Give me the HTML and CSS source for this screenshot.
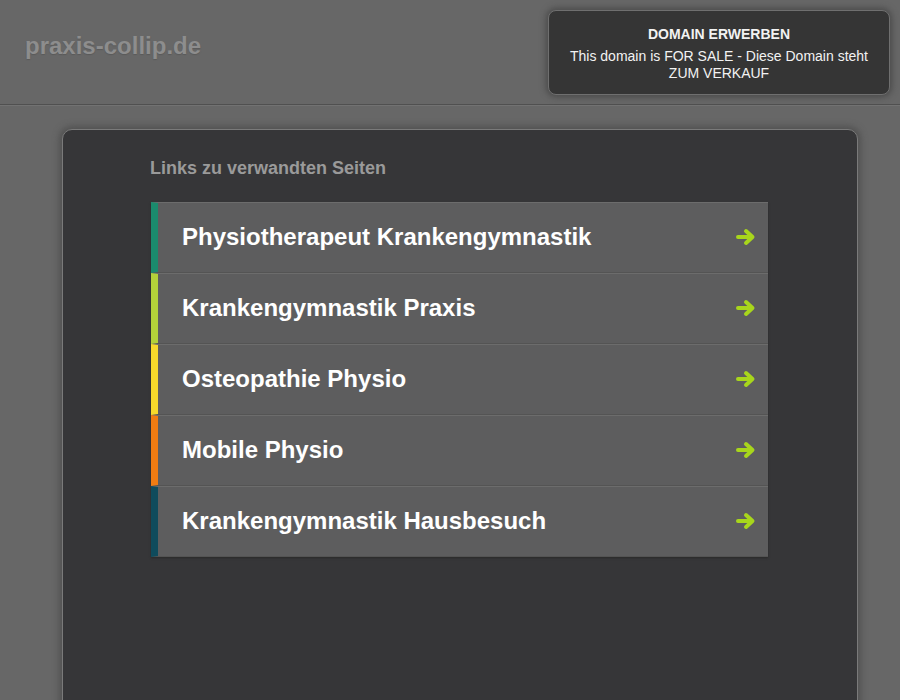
FILE: index.html
```html
<!DOCTYPE html>
<html lang="de">
<head>
<meta charset="utf-8">
<title>praxis-collip.de</title>
<link rel="stylesheet" href="styles.css">
</head>
<body>
<header class="header">
  <div class="site-title">praxis-collip.de</div>
  <div class="sale-box">
    <div class="sale-title">DOMAIN ERWERBEN</div>
    <div class="sale-text">This domain is FOR SALE - Diese Domain steht ZUM VERKAUF</div>
  </div>
</header>
<main class="panel">
  <h2 class="links-heading">Links zu verwandten Seiten</h2>
  <ul class="link-list">
    <li class="link-item c1"><span>Physiotherapeut Krankengymnastik</span><svg class="arrow" viewBox="0 0 22 18"><path d="M2 9h13.5M10 3l6.5 6-6.5 6" fill="none" stroke="currentColor" stroke-width="4" stroke-linejoin="round" stroke-linecap="round"/></svg></li>
    <li class="link-item c2"><span>Krankengymnastik Praxis</span><svg class="arrow" viewBox="0 0 22 18"><path d="M2 9h13.5M10 3l6.5 6-6.5 6" fill="none" stroke="currentColor" stroke-width="4" stroke-linejoin="round" stroke-linecap="round"/></svg></li>
    <li class="link-item c3"><span>Osteopathie Physio</span><svg class="arrow" viewBox="0 0 22 18"><path d="M2 9h13.5M10 3l6.5 6-6.5 6" fill="none" stroke="currentColor" stroke-width="4" stroke-linejoin="round" stroke-linecap="round"/></svg></li>
    <li class="link-item c4"><span>Mobile Physio</span><svg class="arrow" viewBox="0 0 22 18"><path d="M2 9h13.5M10 3l6.5 6-6.5 6" fill="none" stroke="currentColor" stroke-width="4" stroke-linejoin="round" stroke-linecap="round"/></svg></li>
    <li class="link-item c5"><span>Krankengymnastik Hausbesuch</span><svg class="arrow" viewBox="0 0 22 18"><path d="M2 9h13.5M10 3l6.5 6-6.5 6" fill="none" stroke="currentColor" stroke-width="4" stroke-linejoin="round" stroke-linecap="round"/></svg></li>
  </ul>
</main>
</body>
</html>
```
FILE: styles.css
```css
html, body {
  margin: 0;
  padding: 0;
}
body {
  background: #676767;
  font-family: "Liberation Sans", Arial, sans-serif;
  height: 700px;
  overflow: hidden;
}
.header {
  height: 105px;
  border-bottom: 1px solid #505050;
  box-shadow: 0 1px 0 #727272;
  display: flex;
  justify-content: space-between;
  align-items: flex-start;
  box-sizing: border-box;
}
.site-title {
  margin: 33px 0 0 25px;
  font-size: 24px;
  font-weight: bold;
  color: #8d8d8d;
  text-shadow: 0 1px 1px #5a5a5a;
  line-height: 26px;
}
.sale-box {
  margin: 10px 10px 0 0;
  width: 342px;
  height: 85px;
  box-sizing: border-box;
  background: #353535;
  border: 1px solid #6f6f6f;
  border-radius: 8px;
  box-shadow: 0 0 6px 2px #4a4a4a;
  color: #f2f2f2;
  text-align: center;
  padding: 15px 14px 0;
  font-size: 14px;
  line-height: 17px;
}
.sale-title {
  font-weight: bold;
  margin-bottom: 5px;
}
.panel {
  display: block;
  margin: 24px 0 0 62px;
  width: 796px;
  height: 600px;
  box-sizing: border-box;
  background: #363638;
  border: 1px solid #7a7a7a;
  border-radius: 10px;
  box-shadow: 0 0 6px 3px #525252;
  padding: 28px 0 0 88px;
}
.links-heading {
  margin: 0 0 23px -1px;
  font-size: 18px;
  font-weight: bold;
  color: #9a9a9a;
  line-height: 21px;
}
.link-list {
  list-style: none;
  margin: 0;
  padding: 0;
  width: 617px;
  box-shadow: 0 1px 2px #2a2a2a;
}
.link-item {
  height: 71px;
  box-sizing: border-box;
  background: #5d5d5e;
  border-top: 1px solid #6c6c6c;
  border-bottom: 1px solid #545454;
  border-left: 7px solid #1c8a6c;
  display: flex;
  align-items: center;
  justify-content: space-between;
  padding: 0 10px 1px 24px;
  color: #ffffff;
  font-size: 24px;
  font-weight: bold;
}
.link-item.c1 { border-left-color: #1b8b6d; }
.link-item.c2 { border-left-color: #b3d13a; }
.link-item.c3 { border-left-color: #f6d92b; }
.link-item.c4 { border-left-color: #f07c12; }
.link-item.c5 { border-left-color: #0f4b5c; }
.arrow {
  width: 22px;
  height: 18px;
  color: #a8d61c;
}
```
